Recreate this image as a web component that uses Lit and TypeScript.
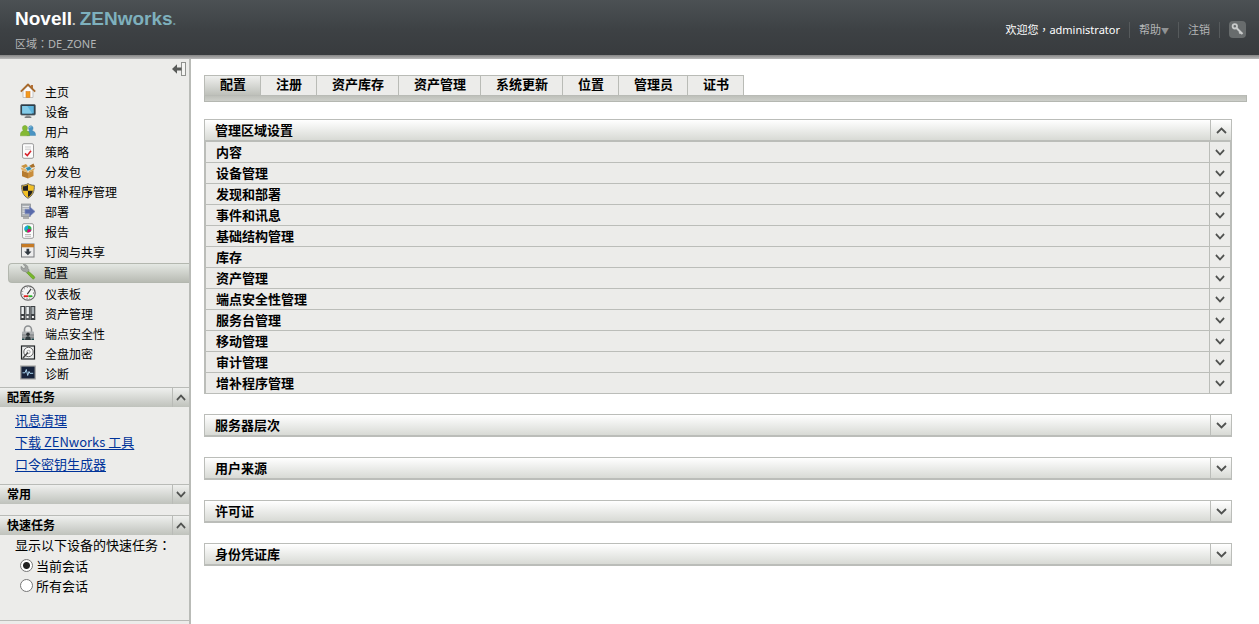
import { LitElement, html, css, svg, TemplateResult } from 'lit';
import { customElement, property, state } from 'lit/decorators.js';
import { classMap } from 'lit/directives/class-map.js';

const icons: Record<string, TemplateResult> = {
  home: svg`<rect x="11" y="2" width="2" height="4" fill="#b5713a"/>
    <path d="M3 7.500 8 2.600l5 4.900V14.500H3Z" fill="#fafafa" stroke="#b9b9b9" stroke-width=".8"/>
    <path d="M.8 8.600 8 1.500l7.200 7.100" fill="none" stroke="#a86a2c" stroke-width="1.800" stroke-linejoin="round"/>
    <rect x="6" y="8.500" width="4" height="6" fill="#f39a1c" stroke="#d9812a" stroke-width=".6"/>`,
  device: svg`<rect x=".7" y="1.500" width="14.600" height="10.500" rx="1" fill="#2e3c46" stroke="#59656d" stroke-width=".8"/>
    <rect x="2.200" y="3" width="11.600" height="7.500" fill="#5db4dc"/><path d="M2.200 3h5l5 7.500h-10Z" fill="#84cbe8"/>
    <path d="M6.500 12h3l1 2.500h-5Z" fill="#9a9a9a"/><rect x="4.500" y="13.500" width="7" height="1.500" rx=".7" fill="#7c7f80"/>`,
  users: svg`<path d="M7 12.500c0-3 1-4.400 2.500-4.700C7.900 5.400 8.500 2.800 10.800 2.800s3 2.600 1.400 5c2.200.3 3.400 1.700 3.400 4.700Z" fill="#4a94c2" stroke="#3c7ea8" stroke-width=".4"/>
    <path d="M.3 12.800c0-3.300 1-4.700 3-5C1.700 5.200 2.300 2.500 4.900 2.500s3.300 2.700 1.700 5.300c2.200.3 3 1.700 3 5Z" fill="#84b934" stroke="#6a9b26" stroke-width=".4"/>
    <path d="M9.500 5c.3-1.200 1.200-1.500 2-1.200" stroke="#9dcbe4" fill="none"/>`,
  policy: svg`<rect x="2.500" y=".7" width="11" height="14.600" rx="1.500" fill="#fcfcfc" stroke="#9b9b9b"/>
    <path d="M5 4h6M5 6.200h6" stroke="#c9c9c9"/><path d="m5 10.300 2.300 2.200L11 7.800" fill="none" stroke="#d8242c" stroke-width="1.600"/>`,
  bundle: svg`<path d="M2 7.500 8 9.800v5.700l-6-2.300Z" fill="#b57b2f"/><path d="M8 9.800l5.500-2.400v5.700L8 15.500Z" fill="#c98d3c"/>
    <path d="M2 7.500.5 4.500 6.500 6 8 9.800Z" fill="#e3b36a"/><path d="M8 9.800 9.700 7l5.500-2-1.700 2.500Z" fill="#dca855"/>
    <path d="M1 3 6 1 8 3.500 4 5.300Z" fill="#c9933f"/><path d="M9 3l4.500-2.500L15 4l-4.500 1Z" fill="#a87029"/>
    <path d="M5.300 4.800 9.800 3.300 12 6.300 7.500 8.200Z" fill="#348cae" stroke="#d5edf5" stroke-width=".6"/>`,
  shield: svg`<path d="M8 .6c2 1.300 4 1.700 6.300 1.700.3 6-1.500 10.500-6.300 13C3.200 12.800 1.400 8.300 1.700 2.300 4 2.300 6 1.900 8 .6Z" fill="#f2c025" stroke="#6b6b6b"/>
    <path d="M8 1.800C6.300 2.900 4.500 3.200 2.800 3.300c0 1.700.1 3.100.4 4.400H8Z" fill="#222"/><path d="M8 7.700h4.800C12.100 10.700 10.600 12.700 8 14.100Z" fill="#222"/>`,
  deploy: svg`<rect x="1.500" y="1" width="9" height="12.500" fill="#aeb2b6" stroke="#85898d" stroke-width=".7"/>
    <path d="M2.500 3.500h7M2.500 5.800h7M2.500 8.100h7M2.500 10.400h7" stroke="#e8eaec" stroke-width=".9"/><path d="M3 15h6" stroke="#999" stroke-width="1.500"/>
    <path d="M5 6.300h4.500V3.500l5.500 5-5.500 5v-2.800H5Z" fill="#5a6cab" stroke="#7f8cbd" stroke-width=".7"/>`,
  report: svg`<rect x="2.500" y=".7" width="11" height="14.600" rx="1.500" fill="#fcfcfc" stroke="#9b9b9b"/>
    <circle cx="8" cy="6" r="3.500" fill="#2bb24c"/><path d="M8 6V2.500A3.500 3.500 0 0 0 4.900 7.700Z" fill="#18a7e0"/><path d="M8 6 7 9.300a3.500 3.500 0 0 0 4.400-2.600Z" fill="#e4007f"/>
    <path d="M5 11.500h6M5 13.300h6" stroke="#b9b9b9"/>`,
  share: svg`<rect x="1.500" y="1" width="12.500" height="13" fill="#ededed" stroke="#74777a"/><rect x="1.500" y="1" width="12.500" height="3.300" fill="#c57a25"/>
    <path d="M6.500 5.800h2.700v2.700h2.300l-3.600 3.700-3.700-3.700h2.300Z" fill="#303840"/>`,
  config: svg`<path d="m7.300 6.200 7 6.300c1.300 1.200-.8 3.400-2 2L5.800 7.800Z" fill="#78b82a" stroke="#5c9320" stroke-width=".7"/>
    <path d="M1.200 2.300 3.300 4.500 5 4.200 5.300 2.400 3.300.6C5.700-.1 8.300 1.700 8 4.600l1.300 1.700-2.600 2.500L5 7.400C2.300 7.800.4 5 1.200 2.300Z" fill="#a2a5a3" stroke="#7e827f" stroke-width=".6"/>`,
  gauge: svg`<circle cx="8" cy="8" r="7.200" fill="#f5f5f5" stroke="#666" stroke-width="1.200"/><circle cx="8" cy="8" r="5.500" fill="none" stroke="#777" stroke-dasharray="1 2"/>
    <path d="M7.300 9.200 11 4" stroke="#333" stroke-width="1.200"/><path d="M3.800 11.200h4.700" stroke="#e21d1d" stroke-width="1.800"/><path d="M8.500 11.200h3.700" stroke="#28b228" stroke-width="1.800"/>`,
  asset: svg`<rect x=".3" y="1" width="4.700" height="14" fill="#3d4043"/><rect x="5.300" y="1" width="4.700" height="14" fill="#5c6063"/><rect x="10.300" y="1" width="5" height="14" fill="#3d4144"/>
    <path d="M1.400 2h2.500v7H1.400ZM6.400 2h2.500v7H6.400Z" fill="#eef1f2"/><path d="M11.500 2h2.700v7h-2.700Z" fill="#a9b0b3"/><path d="M1.600 11h2v2h-2ZM6.600 11h2v2h-2ZM11.900 11h2v2h-2Z" fill="#f5f5f5"/>`,
  lock: svg`<path d="M4.500 7V4.500a3.500 3.500 0 0 1 7 0V7" fill="none" stroke="#8d9092" stroke-width="1.600"/><rect x="2" y="6.500" width="12" height="8.500" rx="1" fill="#aeb1b3"/>
    <path d="M2 10h12M2 12.200h12" stroke="#777a7c"/><circle cx="8" cy="9.300" r="1.800" fill="#2c3033"/><path d="M5 15c.3-3 1.500-3.800 3-3.800s2.700.8 3 3.800Z" fill="#2f3a3d"/><path d="M2 13.500h2.500V15H2ZM11.500 13.500H14V15h-2.500Z" fill="#21484b"/>`,
  disk: svg`<rect x="1.500" y="1" width="13" height="13" fill="#e9ecec" stroke="#202325" stroke-width="1.200"/><circle cx="8.500" cy="7" r="4.700" fill="#fbfbfb" stroke="#555" stroke-width=".9"/>
    <circle cx="8.500" cy="7" r="1.700" fill="none" stroke="#888" stroke-width=".7"/><path d="M3 13 8 7.500" stroke="#444" stroke-width="1.500"/>`,
  diag: svg`<rect x=".8" y="1" width="14.400" height="13" fill="#17233b" stroke="#a7a7a5" stroke-width="1.200"/>
    <path d="M2.500 7.800H5l1.300-3.300 1.400 6 1.300-4 .9 1.800h3.300" fill="none" stroke="#a9d2ec" stroke-width="1"/>`,
};

interface NavItem { icon: string; label: string; }

const NAV: NavItem[] = [
  { icon: 'home', label: '主页' },
  { icon: 'device', label: '设备' },
  { icon: 'users', label: '用户' },
  { icon: 'policy', label: '策略' },
  { icon: 'bundle', label: '分发包' },
  { icon: 'shield', label: '增补程序管理' },
  { icon: 'deploy', label: '部署' },
  { icon: 'report', label: '报告' },
  { icon: 'share', label: '订阅与共享' },
  { icon: 'config', label: '配置' },
  { icon: 'gauge', label: '仪表板' },
  { icon: 'asset', label: '资产管理' },
  { icon: 'lock', label: '端点安全性' },
  { icon: 'disk', label: '全盘加密' },
  { icon: 'diag', label: '诊断' },
];

const TABS = ['配置', '注册', '资产库存', '资产管理', '系统更新', '位置', '管理员', '证书'];

const SETTINGS = [
  '内容', '设备管理', '发现和部署', '事件和讯息', '基础结构管理', '库存',
  '资产管理', '端点安全性管理', '服务台管理', '移动管理', '审计管理', '增补程序管理',
];

const PANELS = ['服务器层次', '用户来源', '许可证', '身份凭证库'];

const reset = css`
  * { box-sizing: border-box; }
  button {
    margin: 0; padding: 0; border: 0; background: none;
    font: inherit; color: inherit; text-align: left; cursor: pointer;
  }
  a { color: inherit; text-decoration: none; }
  /* full-width punctuation centred in its cell */
  .punct { font-family: "Noto Sans CJK TC", sans-serif; }
`;

const chevron = (up: boolean, width = 11) => html`
  <svg width=${width} height="7" viewBox="0 0 11 7" preserveAspectRatio="none" aria-hidden="true">
    <path d=${up ? 'M1 6 5.500 1.500 10 6' : 'M1 1 5.500 5.500 10 1'} fill="none" stroke="#505250" stroke-width="1.800"></path>
  </svg>`;

@customElement('zen-header')
export class ZenHeader extends LitElement {
  static styles = [reset, css`
    :host { display: block; }
    .bar {
      display: flex; justify-content: space-between; height: 55px;
      padding: 0 13px 0 15px; color: #b4b6b7; font-size: 11px;
      background: linear-gradient(#4c5154, #3d4144 55%, #383b3e);
    }
    .shade { height: 4px; background: linear-gradient(#858585, #b9b9b9); }
    .brand { padding-top: 8px; }
    .logo {
      margin: 0; font: bold 19px/22px "Liberation Sans", Arial, sans-serif; color: #fff;
      display: flex; gap: 4px;
    }
    .product { color: #7eb0bd; }
    .dot { font-size: 13px; opacity: .7; }
    .zone { line-height: 16px; padding-top: 3px; }
    .tools { display: flex; align-items: center; padding-top: 4px; line-height: 16px; }
    .user { color: #fff; padding-right: 9px; }
    .link { border-left: 1px solid #565a5c; padding: 0 9px; line-height: 16px; }
    .arrow { font-size: 8px; line-height: 0; color: #8f9294; }
    .keycell { border-left: 1px solid #565a5c; padding-left: 9px; height: 16px; display: flex; align-items: center; }
    .key { display: flex; }
  `];

  render() {
    return html`
      <header>
        <div class="bar">
          <div class="brand">
            <h1 class="logo"><span>Novell<span class="dot">.</span></span><span class="product">ZENworks<span class="dot">.</span></span></h1>
            <div class="zone">区域<span class="punct">：</span>DE_ZONE</div>
          </div>
          <div class="tools">
            <span class="user">欢迎您<span class="punct">，</span>administrator</span>
            <button class="link">帮助<span class="arrow">▼</span></button>
            <a class="link" href="#logout">注销</a>
            <span class="keycell">
              <button class="key" aria-label="密钥">
                <svg width="17" height="17" viewBox="0 0 17 17">
                  <rect width="17" height="17" rx="4" fill="#686c6d"></rect>
                  <circle cx="5.800" cy="5.300" r="2.200" fill="none" stroke="#c9cbcb" stroke-width="1.800"></circle>
                  <path d="M7.500 7 13.500 13M10.300 12.500l1.700-1.800" fill="none" stroke="#c9cbcb" stroke-width="2"></path>
                </svg>
              </button>
            </span>
          </div>
        </div>
        <div class="shade"></div>
      </header>`;
  }
}

@customElement('side-section')
export class SideSection extends LitElement {
  @property() heading = '';
  @property({ type: Boolean, reflect: true }) open = false;

  static styles = [reset, css`
    :host { display: block; }
    .head {
      display: flex; width: 100%; height: 20px; border-top: 1px solid #b9bbb7;
      background: linear-gradient(#eff0ee, #bfc2bc);
      font-weight: bold; font-size: 12px; line-height: 19px; padding-left: 7px;
    }
    .text { flex: 1; }
    .toggle {
      width: 17px; height: 19px; border-left: 1px solid #b9bbb7;
      display: flex; align-items: center; justify-content: center;
    }
  `];

  render() {
    return html`
      <button class="head" aria-expanded=${this.open} @click=${() => (this.open = !this.open)}>
        <span class="text">${this.heading}</span>
        <span class="toggle">${chevron(this.open, 10)}</span>
      </button>
      ${this.open ? html`<slot></slot>` : ''}`;
  }
}

@customElement('zen-sidebar')
export class ZenSidebar extends LitElement {
  @state() private active = 9;

  static styles = [reset, css`
    :host { display: block; background: #ececea; border-right: 2px solid #b9bbb7; }
    .fold { display: flex; justify-content: flex-end; height: 23px; padding: 3px 3px 0 0; }
    .fold button { display: flex; height: 14px; }
    .menu { list-style: none; margin: 0; padding: 0 0 3px 8px; font-size: 12px; line-height: 22px; }
    .item { display: flex; align-items: flex-start; gap: 9px; height: 20px; padding-left: 12px; }
    .item svg { margin-top: 1px; }
    .current {
      margin: 1px 0; line-height: 20px; padding-left: 11px; gap: 8px;
      border: 1px solid #b3b7af; border-right: 0; border-radius: 4px 0 0 4px;
      background: linear-gradient(#e4e8e3, #b8bbb3);
    }
    .current svg { margin-top: 0; }
    .tasks {
      list-style: none; margin: 0; padding: 2px 15px 9px; font-size: 13px; line-height: 22px;
      font-family: "Noto Sans CJK SC", sans-serif;
    }
    .tasks a { color: #039; text-decoration: underline; text-underline-offset: 2px; }
    .empty { height: 11px; }
    .quick {
      margin: 0; border: 0; border-bottom: 1px solid #b9bbb7;
      padding: 1px 15px 24px; font-size: 13px; line-height: 20px;
    }
    .quick legend { padding: 0; }
    .choice { display: flex; align-items: center; gap: 3px; padding-left: 5px; }
    .choice input {
      appearance: none; width: 13px; height: 13px; margin: 0 0 2px; border-radius: 50%;
      border: 1px solid #777; background: #fff;
    }
    .choice input:checked { background: radial-gradient(circle, #222 0 3px, #fff 4px); }
  `];

  render() {
    return html`
      <div class="fold">
        <button aria-label="收起">
          <svg width="14" height="14" viewBox="0 0 14 14">
            <rect x="9.500" y=".5" width="4" height="13" fill="#f4f4f2" stroke="#8f918e"></rect>
            <path d="M0 7 5 2.300V5.500h4.500v3H5v3.200Z" fill="#585a58"></path>
          </svg>
        </button>
      </div>
      <nav>
        <ul class="menu">
          ${NAV.map((item, i) => html`
            <li>
              <a href="#${item.icon}" class=${classMap({ item: true, current: i === this.active })}
                @click=${() => (this.active = i)}>
                <svg width="16" height="16" viewBox="0 0 16 16" aria-hidden="true">${icons[item.icon]}</svg>
                <span>${item.label}</span>
              </a>
            </li>`)}
        </ul>
      </nav>
      <side-section heading="配置任务" open>
        <ul class="tasks">
          <li><a href="#messages">讯息清理</a></li>
          <li><a href="#tools">下载 ZENworks 工具</a></li>
          <li><a href="#passkey">口令密钥生成器</a></li>
        </ul>
      </side-section>
      <side-section heading="常用"></side-section>
      <div class="empty"></div>
      <side-section heading="快速任务" open>
        <fieldset class="quick">
          <legend>显示以下设备的快速任务<span class="punct">：</span></legend>
          <label class="choice"><input type="radio" name="scope" checked>当前会话</label>
          <label class="choice"><input type="radio" name="scope">所有会话</label>
        </fieldset>
      </side-section>`;
  }
}

@customElement('zen-panel')
export class ZenPanel extends LitElement {
  @property() heading = '';
  @property({ type: Array }) rows: string[] = [];

  static styles = [reset, css`
    :host { display: block; font-size: 13px; font-weight: bold; }
    .head {
      display: flex; width: 100%; height: 23px; line-height: 20px; padding-left: 10px;
      border: 1px solid #bbbdb9; border-bottom-width: 2px;
      background: linear-gradient(#fff, #d8dad5);
    }
    .text { flex: 1; }
    .toggle {
      width: 21px; align-self: stretch; border-left: 1px solid #bbbdb9;
      display: flex; align-items: center; justify-content: center;
    }
    .rows { list-style: none; margin: 0; padding: 0; border: solid #bbbdb9; border-width: 0 2px; background: #ececea; }
    .row { display: flex; width: 100%; height: 21px; line-height: 20px; padding-left: 10px; border-bottom: 1px solid #bbbdb9; }
  `];

  render() {
    const open = this.rows.length > 0;
    return html`
      <section>
        <button class="head" aria-expanded=${open}>
          <span class="text">${this.heading}</span>
          <span class="toggle">${chevron(open)}</span>
        </button>
        ${open ? html`
          <ul class="rows">
            ${this.rows.map((row) => html`
              <li>
                <button class="row"><span class="text">${row}</span><span class="toggle">${chevron(false, 10)}</span></button>
              </li>`)}
          </ul>` : ''}
      </section>`;
  }
}

@customElement('app-root')
export class AppRoot extends LitElement {
  @state() private tab = 0;

  static styles = [reset, css`
    :host {
      display: flex; flex-direction: column; min-height: 100vh; background: #fff; color: #000;
      font-family: "Noto Sans", "Noto Sans CJK SC", sans-serif; font-size: 13px;
    }
    .body { flex: 1; display: grid; grid-template-columns: 191px minmax(0, 1fr); }
    .main { padding: 16px 12px 16px 13px; }
    .tabs { display: flex; border-left: 1px solid #b9bbb6; }
    .tab {
      height: 20px; padding: 0 14px 2px 15px; font-weight: bold; line-height: 17px;
      border: solid #b9bbb6; border-width: 1px 1px 0 0; background: #ececea; white-space: nowrap;
    }
    .on { background: linear-gradient(#eff0ee, #bec0ba); }
    .strip { height: 7px; border: 1px solid #b4b7b1; border-top-color: #b9bbb6; background: linear-gradient(#bec0ba, #cdcfca); }
    .panels { display: flex; flex-direction: column; gap: 20px; padding: 17px 15px 0 0; }
  `];

  render() {
    return html`
      <zen-header></zen-header>
      <div class="body">
        <zen-sidebar></zen-sidebar>
        <main class="main">
          <div class="tabs" role="tablist">
            ${TABS.map((label, i) => html`
              <button role="tab" aria-selected=${i === this.tab}
                class=${classMap({ tab: true, on: i === this.tab })}
                @click=${() => (this.tab = i)}>${label}</button>`)}
          </div>
          <div class="strip"></div>
          <div class="panels">
            <zen-panel heading="管理区域设置" .rows=${SETTINGS}></zen-panel>
            ${PANELS.map((heading) => html`<zen-panel heading=${heading}></zen-panel>`)}
          </div>
        </main>
      </div>`;
  }
}
